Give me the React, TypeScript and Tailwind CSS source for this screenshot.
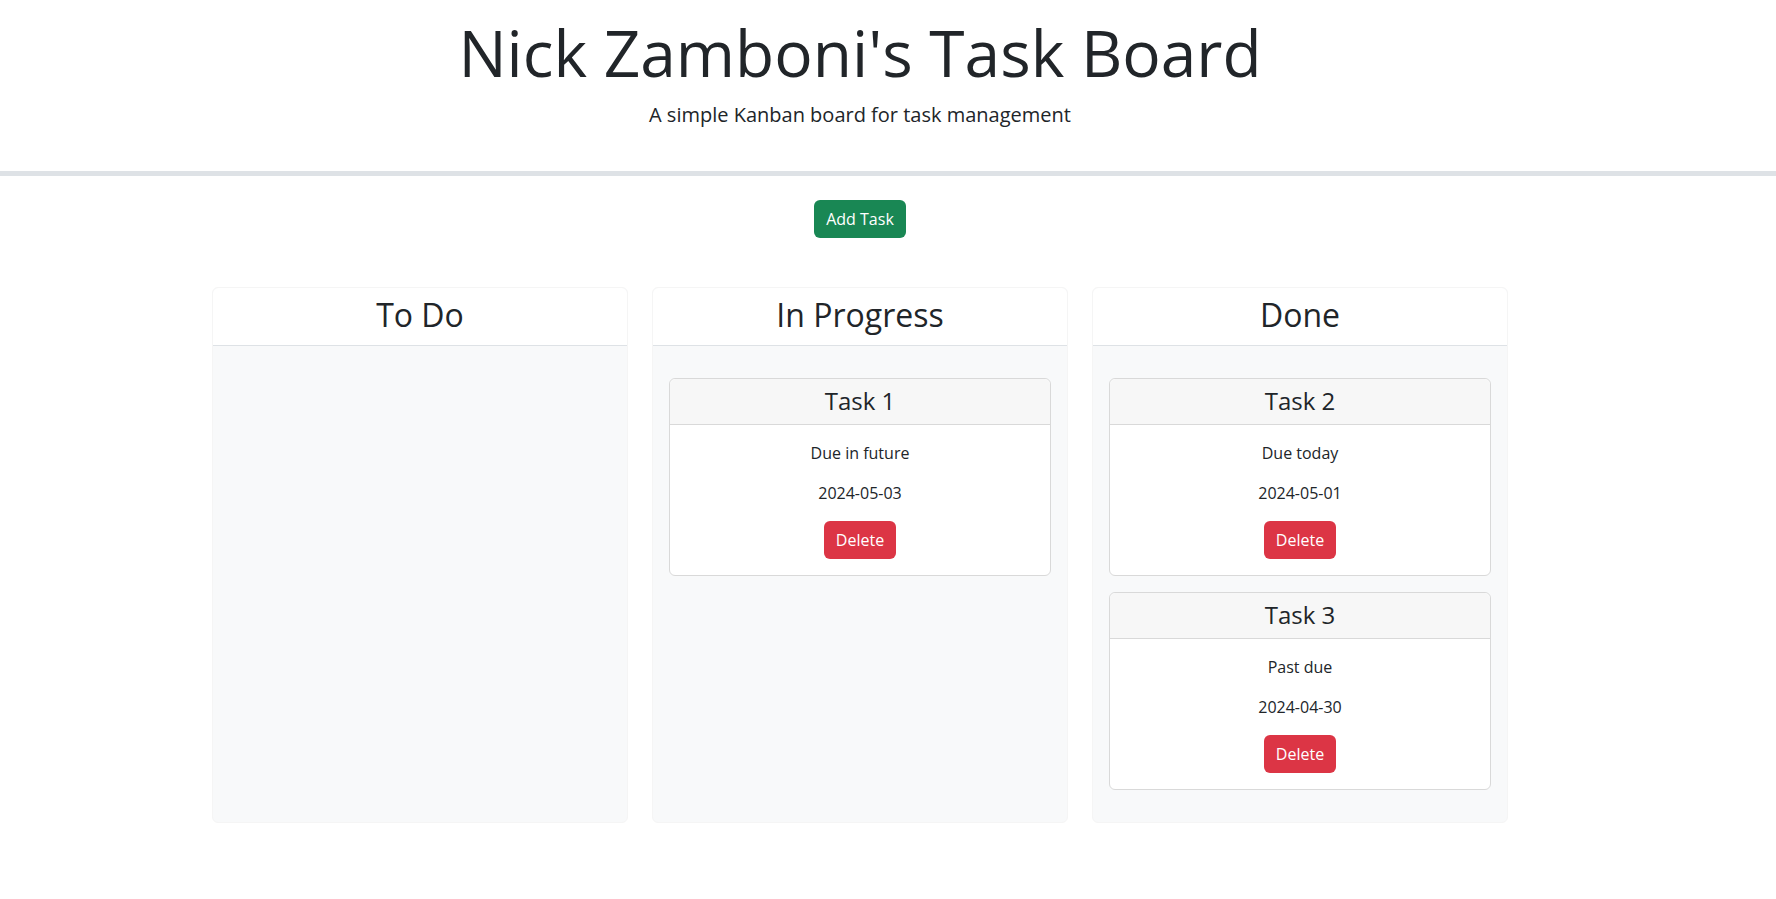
import React from 'react';

type Task = { title: string; status: string; date: string };

const COLUMNS: { name: string; tasks: Task[] }[] = [
  { name: 'To Do', tasks: [] },
  { name: 'In Progress', tasks: [{ title: 'Task 1', status: 'Due in future', date: '2024-05-03' }] },
  {
    name: 'Done',
    tasks: [
      { title: 'Task 2', status: 'Due today', date: '2024-05-01' },
      { title: 'Task 3', status: 'Past due', date: '2024-04-30' },
    ],
  },
];

function TaskCard({ task }: { task: Task }) {
  return (
    <div className="rounded-md border border-[#d9d9d9] bg-white text-center">
      <div className="rounded-t-md border-b border-[#d9d9d9] bg-[#f7f7f7] px-4 py-2 text-[24px] leading-[1.2] font-normal">
        {task.title}
      </div>
      <div className="p-4 text-[16px] leading-[1.5]">
        <p className="mb-4">{task.status}</p>
        <p className="mb-4">{task.date}</p>
        <button type="button" className="h-[38px] rounded-md bg-[#dc3545] px-3 text-white">
          Delete
        </button>
      </div>
    </div>
  );
}

export default function App() {
  return (
    <div className="min-h-screen bg-white text-[#212529]" style={{ fontFamily: '"Open Sans", "Liberation Sans", sans-serif' }}>
      {/* Header */}
      <header className="border-b-[5px] border-[#dee2e6]">
        <div className="w-[1720px] pt-[15px] pb-[41px] text-center">
          <h1 className="mb-2 text-[64px] leading-[1.2] font-normal">Nick Zamboni's Task Board</h1>
          <p className="text-[20px] leading-[1.5] font-normal">A simple Kanban board for task management</p>
        </div>
      </header>

      <main className="w-[1720px]">
        <div className="flex justify-center pt-6">
          <button type="button" className="h-[38px] rounded-md bg-[#198754] px-3 text-[16px] text-white">
            Add Task
          </button>
        </div>

        <div className="mx-auto mt-[49px] grid w-[1296px] grid-cols-3 gap-6">
          {COLUMNS.map((col) => (
            <div key={col.name} className="flex flex-col rounded-md border border-[#f5f5f5] bg-[#f8f9fa]">
              <div className="rounded-t-md border-b border-[#dee2e6] bg-white pt-2 pb-[11px] text-center text-[32px] leading-[1.2] font-normal">
                {col.name}
              </div>
              <div className="flex-1 p-4">
                <div className="flex flex-col gap-4 py-4">
                  {col.tasks.map((t) => (
                    <TaskCard key={t.title} task={t} />
                  ))}
                </div>
              </div>
            </div>
          ))}
        </div>
      </main>
    </div>
  );
}
